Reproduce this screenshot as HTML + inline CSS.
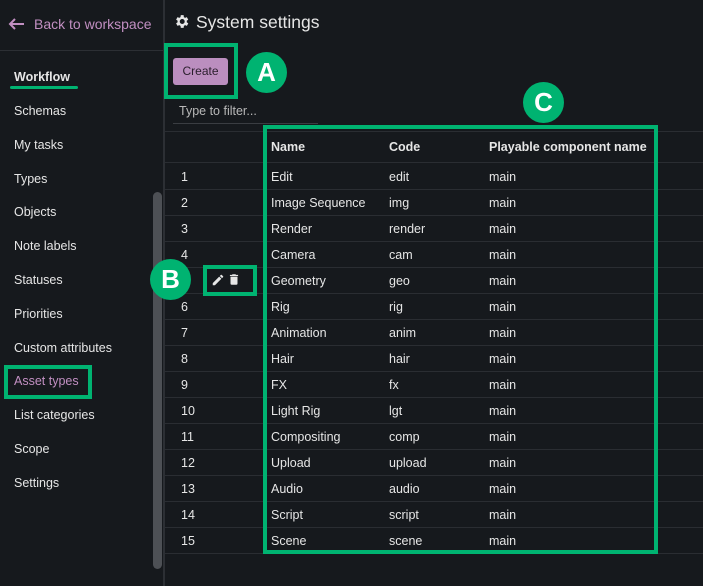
<!DOCTYPE html>
<html><head><style>
body{margin:0;width:703px;height:586px;background:#16191d;font-family:"Liberation Sans",sans-serif;color:#e6e6e6;position:relative;overflow:hidden;font-size:12.5px}
.a{position:absolute;white-space:nowrap}
.nav{left:14px;font-size:12.5px;color:#e6e6e6}
.g{position:absolute;border:4px solid #00b371;box-sizing:border-box}
.c{position:absolute;background:#00b371;border-radius:50%;color:#fff;font-weight:bold;font-size:26px;text-align:center;font-family:"Liberation Sans",sans-serif}
.hl{position:absolute;left:165px;right:0;height:1px;background:#2a2d32}
</style></head><body>
<div class="a" style="left:163px;top:0;width:2px;height:586px;background:#2c2f34"></div>
<div class="a" style="left:0;top:50px;width:163px;height:1px;background:#2c2f34"></div>
<div class="a" style="left:153px;top:192px;width:9px;height:377px;background:#4d5055;border-radius:5px"></div>
<svg class="a" style="left:8px;top:18px" width="17" height="12" viewBox="0 0 17 12"><path d="M16 6H2M7 1L2 6l5 5" stroke="#c28fc2" stroke-width="2" fill="none"/></svg>
<div class="a" style="left:34px;top:16px;color:#c28fc2;font-size:14px">Back to workspace</div>
<div class="a nav" style="top:70px;font-weight:bold">Workflow</div>
<div class="a" style="left:10px;top:86px;width:68px;height:3px;background:#00b371;border-radius:2px"></div>
<div class="a nav" style="top:104px">Schemas</div>
<div class="a nav" style="top:138px">My tasks</div>
<div class="a nav" style="top:172px">Types</div>
<div class="a nav" style="top:205px">Objects</div>
<div class="a nav" style="top:239px">Note labels</div>
<div class="a nav" style="top:273px">Statuses</div>
<div class="a nav" style="top:307px">Priorities</div>
<div class="a nav" style="top:341px">Custom attributes</div>
<div class="a nav" style="top:374px;color:#c28fc2">Asset types</div>
<div class="a nav" style="top:408px">List categories</div>
<div class="a nav" style="top:442px">Scope</div>
<div class="a nav" style="top:476px">Settings</div>
<div class="g" style="left:4px;top:365px;width:88px;height:34px"></div>

<svg class="a" style="left:173px;top:13px" width="17" height="17" viewBox="0 0 24 24"><path fill="#e6e6e6" d="M19.4 13a7.5 7.5 0 000-2l2.1-1.6-2-3.5-2.5 1a7.4 7.4 0 00-1.7-1L15 3h-4l-.4 2.9a7.4 7.4 0 00-1.7 1l-2.5-1-2 3.5L6.5 11a7.5 7.5 0 000 2l-2.1 1.6 2 3.5 2.5-1a7.4 7.4 0 001.7 1L11 21h4l.4-2.9a7.4 7.4 0 001.7-1l2.5 1 2-3.5zM13 15.5a3.5 3.5 0 110-7 3.5 3.5 0 010 7z"/></svg>
<div class="a" style="left:196px;top:12px;font-size:17.5px;color:#e6e6e6">System settings</div>

<div class="a" style="left:173px;top:58px;width:55px;height:27px;background:#bb8ebf;border-radius:3px;color:#2a1e2c;font-size:12px;text-align:center;line-height:27px">Create</div>
<div class="g" style="left:164px;top:43px;width:74px;height:56px"></div>
<div class="c" style="left:246px;top:52px;width:41px;height:41px;line-height:41px">A</div>

<div class="a" style="left:179px;top:104px;color:#b8b8b8;font-size:12.5px">Type to filter...</div>
<div class="a" style="left:173px;top:123px;width:145px;height:1px;background:#3a3d42"></div>

<div class="hl" style="top:131px"></div>
<div class="hl" style="top:162px"></div>
<div id="rows"></div>
<div class="a" style="left:271px;top:140px;font-weight:bold">Name</div>
<div class="a" style="left:389px;top:140px;font-weight:bold">Code</div>
<div class="a" style="left:489px;top:140px;font-weight:bold">Playable component name</div>
<script>
var d=[["Edit","edit"],["Image Sequence","img"],["Render","render"],["Camera","cam"],["Geometry","geo"],["Rig","rig"],["Animation","anim"],["Hair","hair"],["FX","fx"],["Light Rig","lgt"],["Compositing","comp"],["Upload","upload"],["Audio","audio"],["Script","script"],["Scene","scene"]];
var h="";
d.forEach(function(r,i){var y=176+26*i;
h+='<div class="hl" style="top:'+(y+13)+'px"></div>';
if(i!=4)h+='<div class="a" style="left:181px;top:'+(y-6)+'px">'+(i+1)+'</div>';
h+='<div class="a" style="left:271px;top:'+(y-6)+'px">'+r[0]+'</div><div class="a" style="left:389px;top:'+(y-6)+'px">'+r[1]+'</div><div class="a" style="left:489px;top:'+(y-6)+'px">main</div>';});
document.getElementById("rows").innerHTML=h;
</script>
<div class="g" style="left:263px;top:125px;width:395px;height:429px"></div>
<div class="c" style="left:523px;top:82px;width:41px;height:41px;line-height:41px">C</div>
<div class="c" style="left:150px;top:259px;width:41px;height:41px;line-height:41px">B</div>
<div class="g" style="left:203px;top:265px;width:54px;height:31px"></div>
<svg class="a" style="left:211px;top:273px" width="14" height="14" viewBox="0 0 24 24"><path fill="#e6e6e6" d="M3 17.25V21h3.75L17.8 9.94l-3.75-3.75zM20.7 7.04a1 1 0 000-1.41l-2.34-2.34a1 1 0 00-1.41 0l-1.83 1.83 3.75 3.75z"/></svg>
<svg class="a" style="left:227px;top:272px" width="14" height="15" viewBox="0 0 24 24"><path fill="#e6e6e6" d="M6 19a2 2 0 002 2h8a2 2 0 002-2V7H6zM19 4h-3.5l-1-1h-5l-1 1H5v2h14z"/></svg>
</body></html>
